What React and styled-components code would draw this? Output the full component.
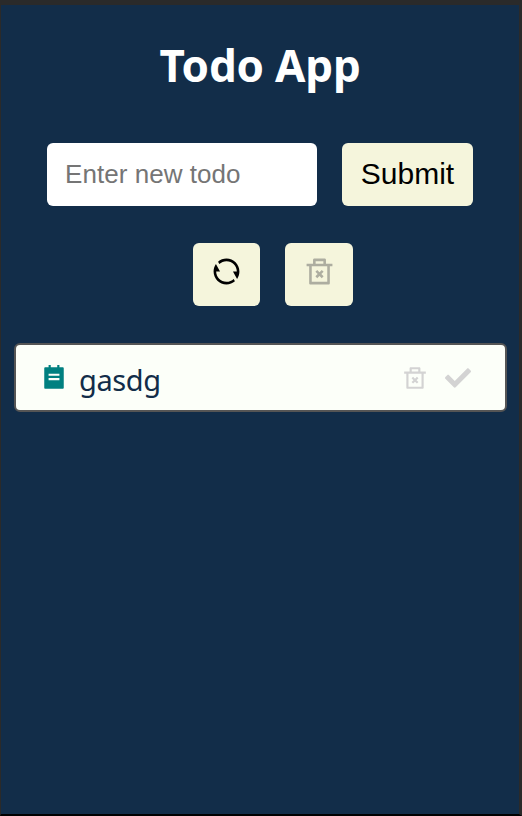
import React, { useState } from "react";
import styled, { createGlobalStyle } from "styled-components";
import { RiRefreshLine, RiDeleteBin2Line, RiTodoFill } from "react-icons/ri";
import { FaCheck } from "react-icons/fa";

const GlobalStyle = createGlobalStyle`
  * { box-sizing: border-box; }
  body { margin: 0; background: #122d49; }
`;

const Page = styled.main`
  height: 816px;
  display: flex;
  flex-direction: column;
  border-style: solid;
  border-width: 5px 3px 2px 1px;
  border-color: #2a2a2a #2a2a2a #000 #2a2a2a;
  background: #122d49;
  color: #122d49;
`;

const Title = styled.h1`
  margin: 29px 0 0;
  height: 62px;
  text-align: center;
  color: #fff;
  font: 700 44px/62px "Noto Sans", sans-serif;
  letter-spacing: -0.2px;
`;

const Form = styled.form`
  display: flex;
  gap: 25px;
  margin: 47px 0 0 46px;
`;

const Field = styled.input`
  width: 270px;
  height: 63px;
  padding: 0 18px;
  border: 0;
  border-radius: 6px;
  background: #fff;
  font: 26px "Liberation Sans", Arial, sans-serif;
  letter-spacing: 0.05px;
  &::placeholder { color: #757575; }
`;

const Button = styled.button`
  display: flex;
  align-items: center;
  justify-content: center;
  width: ${(p) => p.$width}px;
  height: 63px;
  padding: 0 0 2px;
  border: 0;
  border-radius: 6px;
  background: #f5f5dc;
  color: ${(p) => (p.disabled ? "#adada0" : "#000")};
  font: 30px "Liberation Sans", Arial, sans-serif;
  svg { margin: 0 0 5px; }
`;

const Actions = styled.div`
  display: flex;
  gap: 25px;
  margin: 37px 0 0 192px;
`;

const Item = styled.article`
  display: flex;
  align-items: center;
  width: 493px;
  height: 69px;
  margin: 37px 0 0 13px;
  padding: 0 34px 0 25px;
  border: 2px solid #555;
  border-radius: 6px;
  background: #fcfff9;
`;

const ItemIcon = styled(RiTodoFill)`
  color: #008080;
`;

const ItemText = styled.span`
  flex: 1;
  margin: 4px 0 0 12px;
  font: 29px/40px "Noto Sans", sans-serif;
  letter-spacing: -0.4px;
`;

const ItemTools = styled.div`
  display: flex;
  gap: 17px;
  color: #d3d3d3;
`;

export default function App() {
  const [value, setValue] = useState("");
  return (
    <>
      <GlobalStyle />
      <Page>
        <Title>Todo App</Title>
        <Form onSubmit={(e) => e.preventDefault()}>
          <Field placeholder="Enter new todo" value={value} onChange={(e) => setValue(e.target.value)} />
          <Button type="submit" $width={131}>Submit</Button>
        </Form>
        <Actions>
          <Button $width={67} aria-label="Reset"><RiRefreshLine size={31} /></Button>
          <Button $width={68} disabled aria-label="Clear completed"><RiDeleteBin2Line size={31} /></Button>
        </Actions>
        <Item>
          <ItemIcon size={26} />
          <ItemText>gasdg</ItemText>
          <ItemTools>
            <RiDeleteBin2Line size={26} />
            <FaCheck size={26} />
          </ItemTools>
        </Item>
      </Page>
    </>
  );
}
